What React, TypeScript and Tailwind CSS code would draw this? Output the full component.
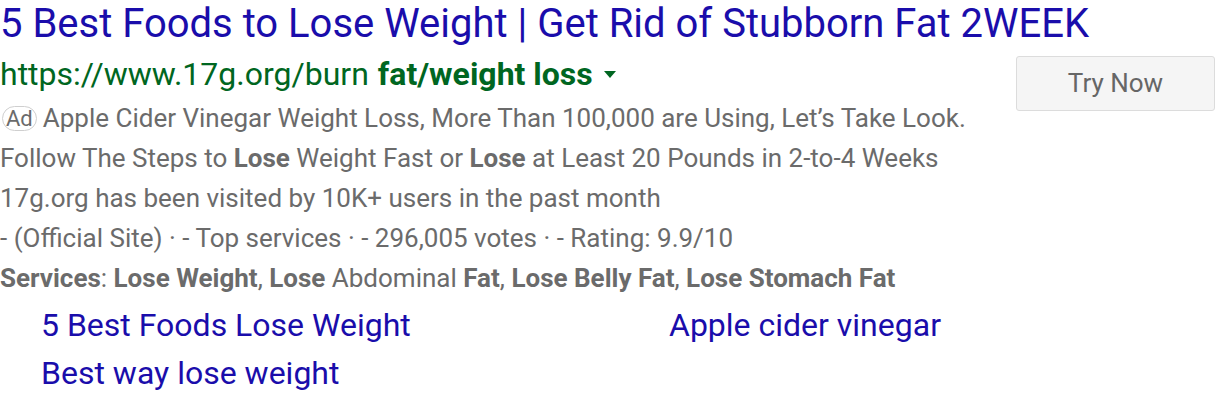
const sitelinks = [
  "5 Best Foods Lose Weight",
  "Apple cider vinegar",
  "Best way lose weight",
];

export default function App() {
  return (
    <main className="w-[1216px] h-[402px] overflow-hidden bg-white font-['Roboto',sans-serif]">
      {/* Headline */}
      <h1 className="whitespace-nowrap text-[40px] leading-[48px] text-[#1a0dab]">
        5 Best Foods to Lose Weight | Get Rid of Stubborn Fat 2WEEK
      </h1>

      <div className="flex items-start">
        <div className="flex-1">
          {/* Display url */}
          <div className="flex h-[52px] items-center whitespace-nowrap text-[32px] text-[#006621]">
            <span>https://www.17g.org/burn</span>
            <b className="ml-[9px] font-bold">fat/weight loss</b>
            <svg width="12" height="8" viewBox="0 0 12 8" className="ml-[11px] mt-[2px]">
              <path d="M0 0h12L6 7z" fill="#006621" />
            </svg>
          </div>

          {/* Description */}
          <div className="-mt-[2px] whitespace-nowrap text-[26px] leading-[40px] text-[#6b6b6b]">
            <p className="flex items-center">
              <span className="mr-[6px] ml-[2px] rounded-full border border-[#cfcfcf] px-[3px] text-[22px] leading-[23px]">
                Ad
              </span>
              Apple Cider Vinegar Weight Loss, More Than 100,000 are Using, Let’s Take Look.
            </p>
            <p>
              Follow The Steps to <b>Lose</b> Weight Fast or <b>Lose</b> at Least 20 Pounds in
              2-to-4 Weeks
            </p>
            <p>17g.org has been visited by 10K+ users in the past month</p>
            <p>- (Official Site) · - Top services · - 296,005 votes · - Rating: 9.9/10</p>
            <p>
              <b>Services</b>: <b>Lose Weight</b>, <b>Lose</b> Abdominal <b>Fat</b>,{" "}
              <b>Lose Belly Fat</b>, <b>Lose Stomach Fat</b>
            </p>
          </div>

          {/* Sitelinks */}
          <div className="mt-[3px] grid grid-cols-[628px_auto] pl-[41px] text-[32px] leading-[48px] text-[#1a0dab]">
            {sitelinks.map((s) => (
              <span key={s}>{s}</span>
            ))}
          </div>
        </div>

        <button className="mr-[1px] mt-[8px] h-[55px] w-[199px] shrink-0 rounded-[3px] border border-[#dcdcdc] bg-[#f5f5f5] text-[26px] text-[#666]">
          Try Now
        </button>
      </div>
    </main>
  );
}
